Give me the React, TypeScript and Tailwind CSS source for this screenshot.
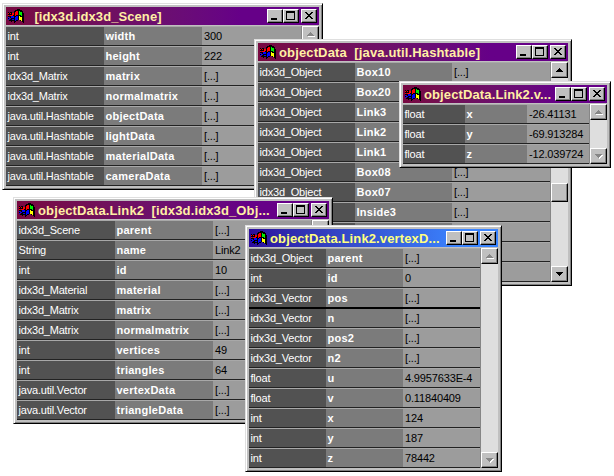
import React from "react";

type Row = [string, string, string];

interface WinProps {
  place: string;
  title: string;
  titleStyle: string;
  textStyle: string;
  col: string;
  rows: Row[];
  blank?: number;
  enabled?: boolean;
  activeRow?: number;
}

function Logo() {
  return (
    <svg width="16" height="16" viewBox="0 0 16 16" shapeRendering="crispEdges" className="shrink-0">
      <path
        fill="#000"
        d="M9 1h3v1h2v1h1v2h1v10h-1v-1h-1v-1h-2v-1h-2v1H8v1H7v1H6v-2H4v1H3v-1H1v-1h1v-1H0v-1h2V9H0V8h2V7H0V6h1V5H0V4h1v1h1V4h2v1h2V3h1V2h2z"
      />
      <path fill="#f00" d="M8 3h2v4H8v1H7V4h1zM4 5h2v2H4zM2 5h1v1H2zM2 7h3v1H2zM0 5h1v1H0zM0 7h1v1H0z" />
      <path fill="#0e0" d="M11 3h1v1h2v4h-1V7h-2z" />
      <path fill="#00f" d="M8 8h2v4H8v1H7V9h1zM3 8h3v2H3zM4 11h2v1H4zM1 10h2v1H1zM0 9h1v1H0zM0 11h1v1H0z" />
      <path fill="#ff0" d="M11 8h1v1h2v4h-1v-1h-2z" />
    </svg>
  );
}

const raised =
  "border border-t-white border-l-white border-r-black border-b-black bg-[#c0c0c0] shadow-[inset_-1px_-1px_0_#808080]";

function Control({ kind }: { kind: "min" | "max" | "close" }) {
  return (
    <div className={`h-[14px] w-4 shrink-0 ${raised} ${kind === "close" ? "ml-0.5" : ""}`}>
      <svg width="14" height="12" viewBox="0 0 14 12" shapeRendering="crispEdges" className="block">
        {kind === "min" && <path fill="#000" d="M3 8h6v2H3z" />}
        {kind === "max" && <path fill="#000" fillRule="evenodd" d="M2 1h9v9H2zM3 3v6h7V3z" />}
        {kind === "close" && (
          <path
            fill="#000"
            d="M3 2h2v1h1v1h2V3h1V2h2v1h-1v1H9v1H8v1h1v1h1v1h1v1H9V8H8V7H6v1H5v1H3V8h1V7h1V6h1V5H5V4H4V3H3z"
          />
        )}
      </svg>
    </div>
  );
}

function ArrowButton({ up, enabled }: { up?: boolean; enabled?: boolean }) {
  const shape = up ? "M7 5h1v1h1v1h1v1h1v1H4V8h1V7h1V6h1z" : "M4 5h7v1h-1v1H9v1H8v1H7V8H6V7H5V6H4z";
  return (
    <div className={`h-4 w-[17px] shrink-0 ${raised}`}>
      <svg width="15" height="14" viewBox="0 0 15 14" shapeRendering="crispEdges" className="block">
        {!enabled && <path fill="#fff" transform="translate(1 1)" d={shape} />}
        <path fill={enabled ? "#000" : "#868686"} d={shape} />
      </svg>
    </div>
  );
}

function PropertyWindow({ place, title, titleStyle, textStyle, col, rows, blank = 0, enabled, activeRow }: WinProps) {
  const all: Row[] = [...rows, ...Array.from({ length: blank }, (): Row => ["", "", ""])];
  return (
    <section
      className={`absolute flex flex-col border border-t-[#dfdfdf] border-l-[#dfdfdf] border-r-black border-b-black bg-[#c0c0c0] p-[3px] shadow-[inset_1px_1px_0_#fff,inset_-1px_-1px_0_#808080] ${place}`}
    >
      <header className={`mb-px flex h-[18px] shrink-0 items-center pr-0.5 pl-0.5 ${titleStyle}`}>
        <Logo />
        <h2 className={`h-[18px] min-w-0 flex-1 pl-[3px] text-[13px] leading-[19px] font-bold whitespace-pre ${textStyle}`}>
          {title}
        </h2>
        <Control kind="min" />
        <Control kind="max" />
        <Control kind="close" />
      </header>
      <div className="flex min-h-0 flex-1">
        <div className="min-w-0 flex-1">
          {all.map(([type, name, value], i) => (
            <div
              key={i}
              className={`flex h-5 border-t border-b text-[11px] leading-[19px] whitespace-nowrap ${
                activeRow !== undefined && i === activeRow + 1 ? "border-t-black" : "border-t-[#a8a8a8]"
              } ${i === activeRow ? "border-b-black" : "border-b-[#222]"}`}
            >
              <div className={`shrink-0 bg-[#525252] pl-[1.5px] tracking-[-0.2px] text-white ${col}`}>{type}</div>
              <div className={`shrink-0 bg-[#7b7b7b] pl-[1.5px] font-bold tracking-[0.25px] text-white ${col}`}>
                {name}
              </div>
              <div className="min-w-0 flex-1 bg-[#9c9c9c] pl-0.5 tracking-[-0.15px] text-black">{value}</div>
            </div>
          ))}
        </div>
        <div className="flex w-[18px] shrink-0 flex-col border-l border-[#868686] bg-[#dedede]">
          <ArrowButton up enabled={enabled} />
          {enabled && <div className={`mt-[105px] h-[19px] w-[17px] ${raised}`} />}
          <div className="flex-1" />
          <ArrowButton enabled={enabled} />
        </div>
      </div>
    </section>
  );
}

const plum = "bg-linear-to-r from-[#780840] to-[#660088] to-75%";

export default function App() {
  return (
    <main className="relative h-[476px] w-[614px] overflow-hidden bg-white font-['Liberation_Sans',Arial,sans-serif]">
      <PropertyWindow
        place="left-[2px] top-[3px] h-[187px] w-[321px]"
        title="  [idx3d.idx3d_Scene]"
        titleStyle={plum}
        textStyle="text-[#ffefa5] tracking-[0.08px]"
        col="w-[98px]"
        rows={[
          ["int", "width", "300"],
          ["int", "height", "222"],
          ["idx3d_Matrix", "matrix", "[...]"],
          ["idx3d_Matrix", "normalmatrix", "[...]"],
          ["java.util.Hashtable", "objectData", "[...]"],
          ["java.util.Hashtable", "lightData", "[...]"],
          ["java.util.Hashtable", "materialData", "[...]"],
          ["java.util.Hashtable", "cameraData", "[...]"],
        ]}
      />
      <PropertyWindow
        place="left-[254px] top-[39px] h-[247px] w-[318px]"
        title="objectData  [java.util.Hashtable]"
        titleStyle={plum}
        textStyle="text-[#ffefa5] tracking-[0.14px]"
        col="w-[97px]"
        enabled
        blank={3}
        rows={[
          ["idx3d_Object", "Box10", "[...]"],
          ["idx3d_Object", "Box20", "[...]"],
          ["idx3d_Object", "Link3", "[...]"],
          ["idx3d_Object", "Link2", "[...]"],
          ["idx3d_Object", "Link1", "[...]"],
          ["idx3d_Object", "Box08", "[...]"],
          ["idx3d_Object", "Box07", "[...]"],
          ["idx3d_Object", "Inside3", "[...]"],
        ]}
      />
      <PropertyWindow
        place="left-[399px] top-[81px] h-[87px] w-[212px]"
        title="objectData.Link2.v..."
        titleStyle={plum}
        textStyle="text-[#ffefa5] tracking-[0.12px]"
        col="w-[62px]"
        rows={[
          ["float", "x", "-26.41131"],
          ["float", "y", "-69.913284"],
          ["float", "z", "-12.039724"],
        ]}
      />
      <PropertyWindow
        place="left-[13px] top-[197px] h-[227px] w-[320px]"
        title="objectData.Link2  [idx3d.idx3d_Obj..."
        titleStyle={plum}
        textStyle="text-[#ffefa5] tracking-[0.13px]"
        col="w-[98px]"
        rows={[
          ["idx3d_Scene", "parent", "[...]"],
          ["String", "name", "Link2"],
          ["int", "id", "10"],
          ["idx3d_Material", "material", "[...]"],
          ["idx3d_Matrix", "matrix", "[...]"],
          ["idx3d_Matrix", "normalmatrix", "[...]"],
          ["int", "vertices", "49"],
          ["int", "triangles", "64"],
          ["java.util.Vector", "vertexData", "[...]"],
          ["java.util.Vector", "triangleData", "[...]"],
        ]}
      />
      <PropertyWindow
        place="left-[245px] top-[225px] h-[247px] w-[257px]"
        title="objectData.Link2.vertexD..."
        titleStyle="bg-linear-to-r from-[#2c0a9c] to-[#3a84ff] to-85%"
        textStyle="text-[#ffff80] tracking-[0.13px]"
        col="w-[77px]"
        activeRow={2}
        rows={[
          ["idx3d_Object", "parent", "[...]"],
          ["int", "id", "0"],
          ["idx3d_Vector", "pos", "[...]"],
          ["idx3d_Vector", "n", "[...]"],
          ["idx3d_Vector", "pos2", "[...]"],
          ["idx3d_Vector", "n2", "[...]"],
          ["float", "u", "4.9957633E-4"],
          ["float", "v", "0.11840409"],
          ["int", "x", "124"],
          ["int", "y", "187"],
          ["int", "z", "78442"],
        ]}
      />
    </main>
  );
}
